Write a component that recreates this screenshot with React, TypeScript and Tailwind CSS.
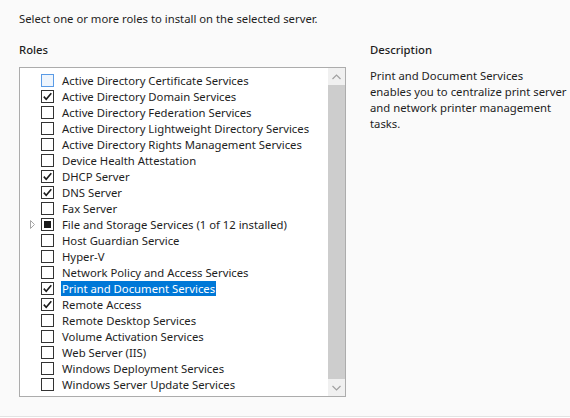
import React from "react";

type Role = { name: string; state: "checked" | "unchecked" | "indeterminate" | "hover"; expandable?: boolean; selected?: boolean };

const roles: Role[] = [
  { name: "Active Directory Certificate Services", state: "hover" },
  { name: "Active Directory Domain Services", state: "checked" },
  { name: "Active Directory Federation Services", state: "unchecked" },
  { name: "Active Directory Lightweight Directory Services", state: "unchecked" },
  { name: "Active Directory Rights Management Services", state: "unchecked" },
  { name: "Device Health Attestation", state: "unchecked" },
  { name: "DHCP Server", state: "checked" },
  { name: "DNS Server", state: "checked" },
  { name: "Fax Server", state: "unchecked" },
  { name: "File and Storage Services (1 of 12 installed)", state: "indeterminate", expandable: true },
  { name: "Host Guardian Service", state: "unchecked" },
  { name: "Hyper-V", state: "unchecked" },
  { name: "Network Policy and Access Services", state: "unchecked" },
  { name: "Print and Document Services", state: "checked", selected: true },
  { name: "Remote Access", state: "checked" },
  { name: "Remote Desktop Services", state: "unchecked" },
  { name: "Volume Activation Services", state: "unchecked" },
  { name: "Web Server (IIS)", state: "unchecked" },
  { name: "Windows Deployment Services", state: "unchecked" },
  { name: "Windows Server Update Services", state: "unchecked" },
];

function Checkbox({ state }: { state: Role["state"] }) {
  if (state === "hover") {
    return <div className="w-[13px] h-[13px] border border-[#5a9be6] bg-[#eef5fd] shrink-0" />;
  }
  return (
    <div className="w-[13px] h-[13px] border border-[#333333] bg-white shrink-0 flex items-center justify-center">
      {state === "checked" && (
        <svg width="11" height="11" viewBox="0 0 11 11">
          <path d="M1.8 5.6 L4.2 8.2 L9.3 2.2" fill="none" stroke="#1a1a1a" strokeWidth="1.6" />
        </svg>
      )}
      {state === "indeterminate" && <div className="w-[7px] h-[7px] bg-[#1a1a1a]" />}
    </div>
  );
}

export default function App() {
  return (
    <div className="w-[570px] h-[418px] bg-[#fafafa] text-[#1e1e1e] text-[11.3px] leading-[16px] font-['Noto_Sans',sans-serif] flex flex-col overflow-hidden">
      <div className="pl-[19px] pt-[11px] h-[42px]">Select one or more roles to install on the selected server.</div>
      <div className="flex pl-[19px]">
        <div className="flex flex-col">
          <div className="h-[25px] font-medium">Roles</div>
          <div className="w-[327px] h-[330px] border border-[#acacac] bg-white flex">
            <div className="flex-1 pt-[4px] flex flex-col">
              {roles.map((r) => (
                <div key={r.name} className="h-[16px] flex items-center">
                  <div className="w-[21px] flex justify-end pr-[6px] shrink-0">
                    {r.expandable && (
                      <svg width="5" height="9" viewBox="0 0 5 9">
                        <path d="M0.5 0.5 L4.5 4.5 L0.5 8.5 Z" fill="none" stroke="#a6a6a6" strokeWidth="1" />
                      </svg>
                    )}
                  </div>
                  <Checkbox state={r.state} />
                  <span
                    className={
                      "ml-[7px] px-[1px] whitespace-nowrap leading-[15px] " +
                      (r.selected ? "bg-[#0078d7] text-white" : "")
                    }
                  >
                    {r.name}
                  </span>
                </div>
              ))}
            </div>
            <div className="w-[17px] bg-[#f0f0f0] flex flex-col">
              <div className="h-[17px] flex items-center justify-center">
                <svg width="9" height="6" viewBox="0 0 9 6">
                  <path d="M0.5 5 L4.5 1 L8.5 5" fill="none" stroke="#a0a0a0" strokeWidth="1.2" />
                </svg>
              </div>
              <div className="flex-1 bg-[#cdcdcd]" />
              <div className="h-[17px] flex items-center justify-center">
                <svg width="9" height="6" viewBox="0 0 9 6">
                  <path d="M0.5 1 L4.5 5 L8.5 1" fill="none" stroke="#a0a0a0" strokeWidth="1.2" />
                </svg>
              </div>
            </div>
          </div>
        </div>
        <div className="ml-[24px] w-[200px] flex flex-col">
          <div className="h-[25px] font-medium">Description</div>
          <div className="pt-[1px] whitespace-nowrap">
            Print and Document Services
            <br />
            enables you to centralize print server
            <br />
            and network printer management
            <br />
            tasks.
          </div>
        </div>
      </div>
      <div className="flex-1" />
      <div className="h-[2px] border-t border-[#e3e3e3] bg-white" />
    </div>
  );
}
